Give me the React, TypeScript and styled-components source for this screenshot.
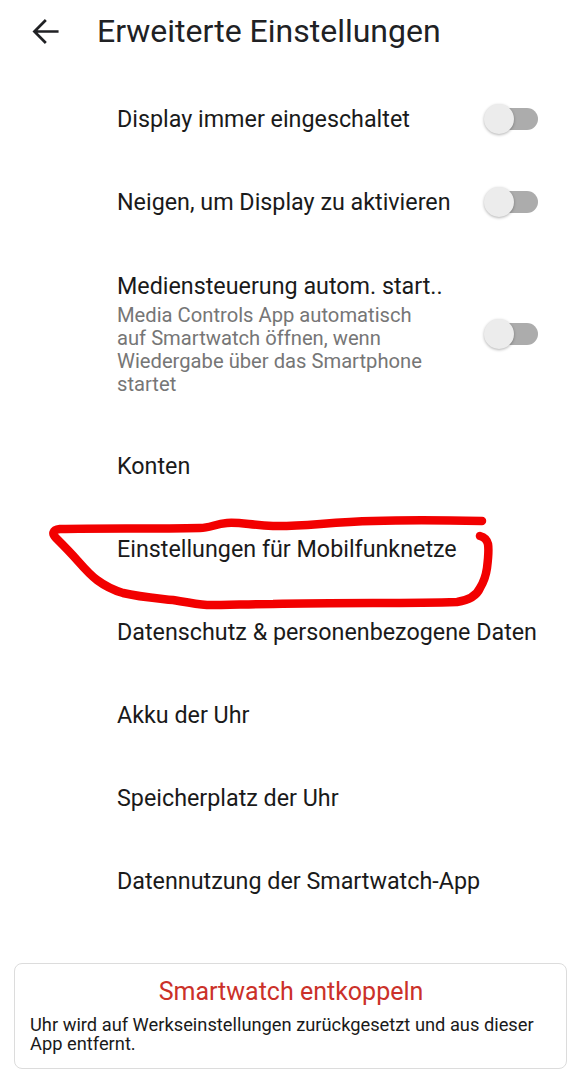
import React from 'react'
import styled, { createGlobalStyle } from 'styled-components'

const GlobalStyle = createGlobalStyle`
  html, body {
    margin: 0;
    padding: 0;
    background: #ffffff;
  }
  body {
    font-family: Roboto, "Noto Sans", Arial, sans-serif;
    color: #1f1f1f;
  }
`

const Page = styled.div`
  position: relative;
  width: 581px;
  height: 1080px;
  overflow: hidden;
  display: flex;
  flex-direction: column;
`

const Header = styled.header`
  height: 62px;
  display: flex;
  align-items: center;
  padding-left: 27px;
  gap: 33px;
`

const BackButton = styled.button`
  border: none;
  background: none;
  padding: 0;
  width: 37px;
  height: 37px;
  display: flex;
  color: #202124;
`

const Title = styled.h1`
  margin: 0;
  font-size: 32px;
  line-height: 40px;
  font-weight: 400;
  color: #202124;
`

const List = styled.div`
  padding-top: 15.5px;
  display: flex;
  flex-direction: column;
`

const Row = styled.div`
  min-height: 83px;
  box-sizing: border-box;
  padding: 0 43px 0 117px;
  display: flex;
  align-items: center;
  justify-content: space-between;
`

const RowText = styled.div`
  display: flex;
  flex-direction: column;
  padding: 28px 0;
  gap: 4px;
`

const RowLabel = styled.span`
  font-size: 23.3px;
  line-height: 28px;
  color: #1a1a1a;
  white-space: nowrap;
`

const RowHint = styled.span`
  font-size: 20.2px;
  line-height: 23.3px;
  color: #767676;
  max-width: 315px;
`

const Switch = styled.div`
  position: relative;
  width: 54px;
  height: 32px;
  flex-shrink: 0;
`

const Track = styled.span`
  position: absolute;
  left: 5px;
  top: 5px;
  width: 49px;
  height: 22px;
  border-radius: 11px;
  background: #acacac;
`

const Thumb = styled.span`
  position: absolute;
  left: 0;
  top: 1px;
  width: 30px;
  height: 30px;
  border-radius: 50%;
  background: #ececec;
  box-shadow: 0 1px 3px rgba(0, 0, 0, 0.3);
`

const Card = styled.div`
  margin: 40.5px 14px 0;
  padding: 12.5px 14px 15px 15px;
  border: 1px solid #dcdcdc;
  border-radius: 8px;
  display: flex;
  flex-direction: column;
  gap: 8px;
`

const CardTitle = styled.div`
  text-align: center;
  font-size: 25px;
  line-height: 30px;
  color: #cb3129;
`

const CardText = styled.div`
  font-size: 18.3px;
  line-height: 19px;
  color: #1a1a1a;
`

const Scribble = styled.svg`
  position: absolute;
  left: 0;
  top: 0;
  pointer-events: none;
`

function Toggle() {
  return (
    <Switch>
      <Track />
      <Thumb />
    </Switch>
  )
}

const plainRows = [
  'Konten',
  'Einstellungen für Mobilfunknetze',
  'Datenschutz & personenbezogene Daten',
  'Akku der Uhr',
  'Speicherplatz der Uhr',
  'Datennutzung der Smartwatch-App',
]

export default function App() {
  return (
    <Page>
      <GlobalStyle />
      <Header>
        <BackButton aria-label="Zurück">
          <svg
            width="37"
            height="37"
            viewBox="0 0 24 24"
            fill="none"
            stroke="currentColor"
            strokeWidth="1.75"
            strokeLinecap="square"
          >
            <path d="M19.6 12H5.2M11.6 5.2 4.8 12l6.8 6.8" />
          </svg>
        </BackButton>
        <Title>Erweiterte Einstellungen</Title>
      </Header>

      <List>
        <Row>
          <RowLabel>Display immer eingeschaltet</RowLabel>
          <Toggle />
        </Row>
        <Row>
          <RowLabel>Neigen, um Display zu aktivieren</RowLabel>
          <Toggle />
        </Row>
        <Row>
          <RowText>
            <RowLabel>Mediensteuerung autom. start..</RowLabel>
            <RowHint>
              Media Controls App automatisch auf Smartwatch öffnen, wenn Wiedergabe über das Smartphone startet
            </RowHint>
          </RowText>
          <Toggle />
        </Row>
        {plainRows.map((label) => (
          <Row key={label}>
            <RowLabel>{label}</RowLabel>
          </Row>
        ))}
      </List>

      <Card>
        <CardTitle>Smartwatch entkoppeln</CardTitle>
        <CardText>
          Uhr wird auf Werkseinstellungen zurückgesetzt und aus dieser App entfernt.
        </CardText>
      </Card>

      {/* hand-drawn marker around the mobile network row */}
      <Scribble width="581" height="1080" viewBox="0 0 581 1080">
        <path
          d="M482 521 C440 520 400 520 373 521 C330 522 300 527 273 526 C250 525 240 522 227 523 C215 524 210 528 200 528 C150 529 100 528 60 529 C52 530 52 534 56 538 C63 545 70 552 77 560 C84 568 90 575 97 580 C105 586 113 590 123 593 C140 597 155 598 173 600 C185 602 195 604 207 605 C230 605 250 604 273 604 C310 603 340 603 373 603 C400 603 430 603 457 602 C470 600 477 595 480 588 C485 580 486 575 487 568 C488 560 489 550 488 544 C487 540 484 537 480 536"
          fill="none"
          stroke="#f20000"
          strokeWidth="8.5"
          strokeLinecap="round"
          strokeLinejoin="round"
        />
      </Scribble>
    </Page>
  )
}
